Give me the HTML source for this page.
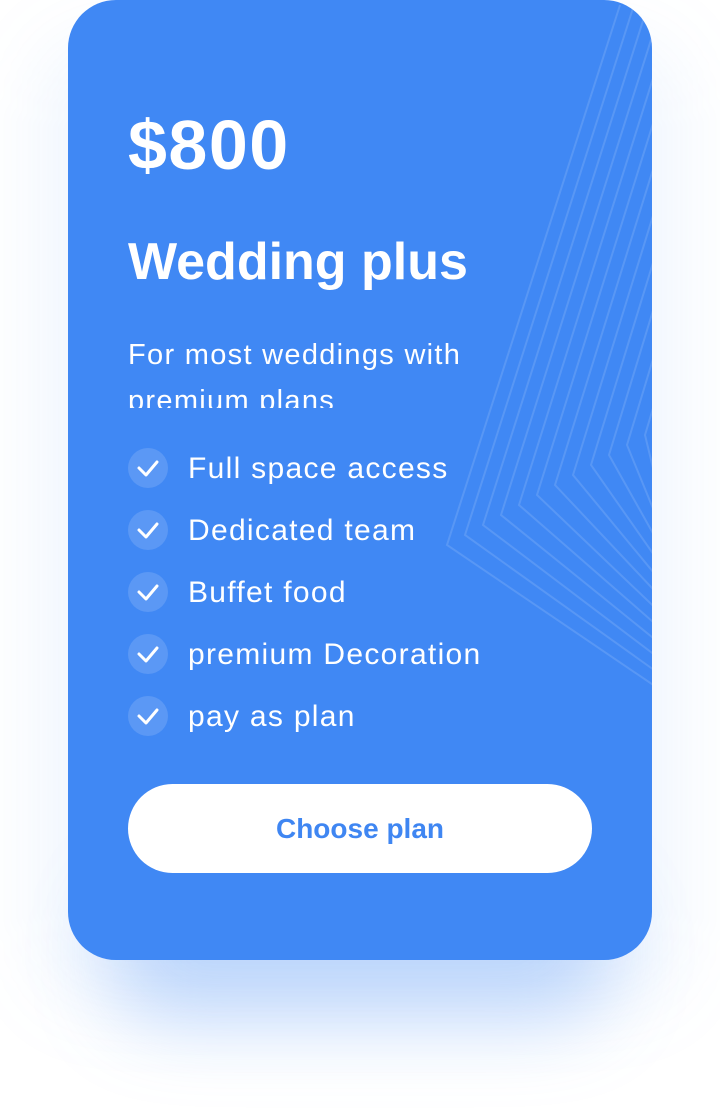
<!DOCTYPE html>
<html><head><style>
body{margin:0;width:720px;height:1112px;background:#fff;font-family:"Liberation Sans",sans-serif;position:relative;overflow:hidden}
.sh{position:absolute;left:110px;top:880px;width:500px;height:140px;background:rgba(64,136,244,0.3);filter:blur(40px);border-radius:60px}
.sh2{position:absolute;left:40px;top:40px;width:640px;height:960px;background:rgba(64,136,244,0.08);filter:blur(40px);border-radius:60px}
.card{position:absolute;left:68px;top:0;width:584px;height:960px;background:#4088F4;border-radius:48px;overflow:hidden;color:#fff}
.price{position:absolute;left:60px;top:105px;font-size:70px;font-weight:bold;letter-spacing:1.5px}
.title{position:absolute;left:60px;top:232px;font-size:52px;font-weight:bold;letter-spacing:0px}
.desc{position:absolute;left:60px;top:332px;font-size:29px;letter-spacing:1.3px;line-height:46px;height:76px;overflow:hidden;width:420px}
.item{position:absolute;left:60px;height:40px;font-size:30px;letter-spacing:1.3px;line-height:42px}
.item .c{position:absolute;left:0;top:0;width:40px;height:40px;border-radius:50%;background:rgba(255,255,255,0.14)}
.item span{position:absolute;left:60px;white-space:nowrap}
.btn{position:absolute;left:60px;top:784px;width:464px;height:89px;background:#fff;border-radius:45px;color:#3F86F2;font-size:28px;font-weight:bold;text-align:center;line-height:89px}
</style></head><body>
<div class="sh2"></div><div class="sh"></div>
<div class="card">
<svg style="position:absolute;left:0;top:0" width="584" height="960">
<g fill="none" stroke="rgba(255,255,255,0.13)" stroke-width="2">
<polyline points="552,5 379,545 600,695"/>
<polyline points="566,5 397,535 600,680"/>
<polyline points="580,5 415,525 600,665"/>
<polyline points="594,5 433,515 600,650"/>
<polyline points="608,5 451,505 600,635"/>
<polyline points="622,5 469,495 600,620"/>
<polyline points="636,5 487,485 600,605"/>
<polyline points="650,5 505,475 600,590"/>
<polyline points="664,5 523,465 600,575"/>
<polyline points="678,5 541,455 600,560"/>
<polyline points="692,5 559,445 600,545"/>
<polyline points="706,5 577,435 600,530"/>
</g></svg>
<div class="price">$800</div>
<div class="title">Wedding plus</div>
<div class="desc">For most weddings with premium plans</div>
<div class="item" style="top:448px"><div class="c"></div><svg style="position:absolute;left:8px;top:8px" width="24" height="24"><path d="M3 12 L10 19 L21 6" fill="none" stroke="#fff" stroke-width="3" stroke-linecap="round" stroke-linejoin="round"/></svg><span>Full space access</span></div>
<div class="item" style="top:510px"><div class="c"></div><svg style="position:absolute;left:8px;top:8px" width="24" height="24"><path d="M3 12 L10 19 L21 6" fill="none" stroke="#fff" stroke-width="3" stroke-linecap="round" stroke-linejoin="round"/></svg><span>Dedicated team</span></div>
<div class="item" style="top:572px"><div class="c"></div><svg style="position:absolute;left:8px;top:8px" width="24" height="24"><path d="M3 12 L10 19 L21 6" fill="none" stroke="#fff" stroke-width="3" stroke-linecap="round" stroke-linejoin="round"/></svg><span>Buffet food</span></div>
<div class="item" style="top:634px"><div class="c"></div><svg style="position:absolute;left:8px;top:8px" width="24" height="24"><path d="M3 12 L10 19 L21 6" fill="none" stroke="#fff" stroke-width="3" stroke-linecap="round" stroke-linejoin="round"/></svg><span>premium Decoration</span></div>
<div class="item" style="top:696px"><div class="c"></div><svg style="position:absolute;left:8px;top:8px" width="24" height="24"><path d="M3 12 L10 19 L21 6" fill="none" stroke="#fff" stroke-width="3" stroke-linecap="round" stroke-linejoin="round"/></svg><span>pay as plan</span></div>
<div class="btn">Choose plan</div>
</div>
</body></html>
